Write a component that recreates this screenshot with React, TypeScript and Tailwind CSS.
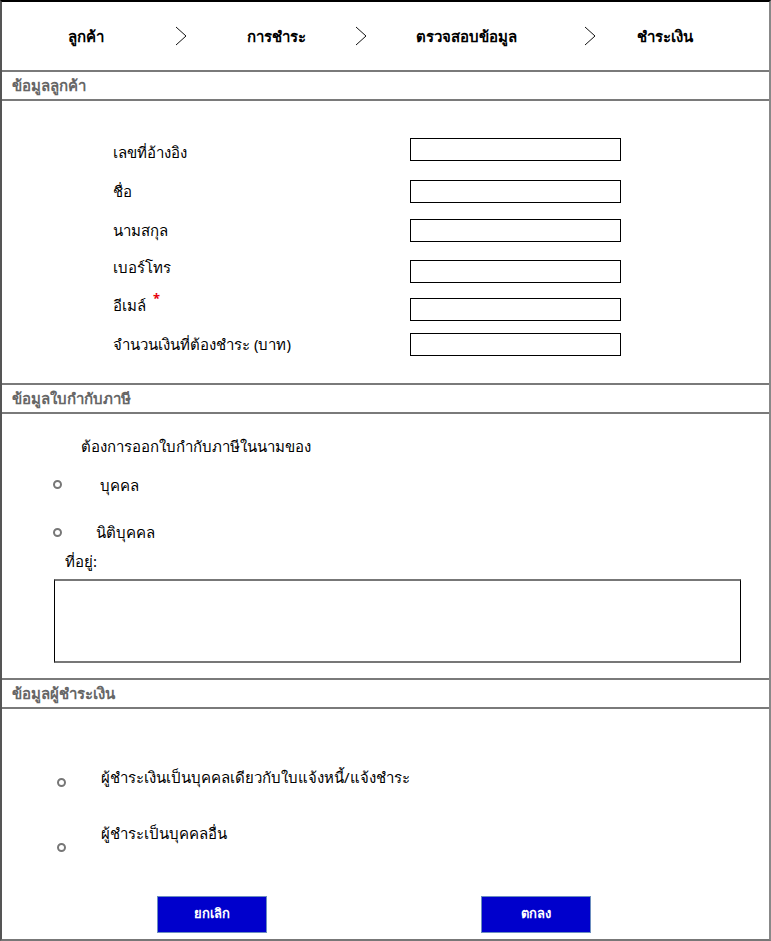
import React from "react";

const Chevron = () => (
  <svg width="20" height="20" viewBox="0 0 20 20" className="block">
    <polyline points="5,1 15,10 5,19" fill="none" stroke="#111" strokeWidth="1" />
  </svg>
);

const SectionHeader = ({ title }: { title: string }) => (
  <div className="h-[31px] border-y-2 border-[#7a7a7a] flex items-center px-[10px] text-[15px] font-bold text-[#666]">
    {title}
  </div>
);

const Radio = () => (
  <span className="block w-[9px] h-[9px] rounded-full border-2 border-[#777] bg-white" />
);

const fields: { label: string; mt: string; off: string; star?: boolean }[] = [
  { label: "เลขที่อ้างอิง", mt: "mt-[37px]", off: "top-[3px]" },
  { label: "ชื่อ", mt: "mt-[19px]", off: "top-0" },
  { label: "นามสกุล", mt: "mt-[16px]", off: "top-0" },
  { label: "เบอร์โทร", mt: "mt-[18px]", off: "-top-[4px]" },
  { label: "อีเมล์", mt: "mt-[15px]", off: "-top-[4px]", star: true },
  { label: "จำนวนเงินที่ต้องชำระ (บาท)", mt: "mt-[12px]", off: "top-0" },
];

export default function App() {
  return (
    <div
      className="w-[771px] h-[941px] bg-white border-t-2 border-l-2 border-t-black border-l-[#555] border-r-2 border-b-2 border-r-[#888] border-b-[#777] flex flex-col text-black"
      style={{ fontFamily: 'Tahoma, "Noto Sans", "DejaVu Sans", sans-serif' }}
    >
      {/* Steps */}
      <div className="h-[68px] shrink-0 flex items-center text-[15px] font-bold">
        <div className="w-[100px] ml-[34px] text-center">ลูกค้า</div>
        <div className="ml-[35px]"><Chevron /></div>
        <div className="w-[120px] ml-[25px] text-center">การชำระ</div>
        <div className="ml-[15px]"><Chevron /></div>
        <div className="w-[160px] ml-[15px] text-center">ตรวจสอบข้อมูล</div>
        <div className="ml-[34px]"><Chevron /></div>
        <div className="w-[120px] ml-[5px] text-center">ชำระเงิน</div>
      </div>

      <SectionHeader title="ข้อมูลลูกค้า" />
      <div className="h-[282px] shrink-0 flex flex-col text-[15px]">
        {fields.map((f) => (
          <div key={f.label} className={`flex items-center ${f.mt}`}>
            <div className="w-[408px] pl-[111px]">
              <span className={`relative ${f.off}`}>
                {f.label}
                {f.star && <span className="text-red-600 text-[13px] font-bold relative -top-[8px] ml-[7px]">*</span>}
              </span>
            </div>
            <div className="w-[211px] h-[23px] border border-black" />
          </div>
        ))}
      </div>

      <SectionHeader title="ข้อมูลใบกำกับภาษี" />
      <div className="h-[264px] shrink-0 flex flex-col text-[15px]">
        <div className="pl-[79px] mt-[21px]">ต้องการออกใบกำกับภาษีในนามของ</div>
        <div className="flex items-center mt-[16px]">
          <div className="ml-[51px]"><Radio /></div>
          <div className="ml-[38px]">บุคคล</div>
        </div>
        <div className="flex items-center mt-[25px]">
          <div className="ml-[51px]"><Radio /></div>
          <div className="ml-[34px]">นิติบุคคล</div>
        </div>
        <div className="pl-[63px] mt-[6px]">ที่อยู่:</div>
        <div className="ml-[52px] mt-[7px] w-[687px] h-[84px] border-y-2 border-y-[#777] border-x border-x-black" />
      </div>

      <SectionHeader title="ข้อมูลผู้ชำระเงิน" />
      <div className="flex-1 flex flex-col text-[15px]">
        <div className="flex items-start mt-[57px]">
          <div className="ml-[55px] mt-[2px] pt-[10px]"><Radio /></div>
          <div className="ml-[35px]">ผู้ชำระเงินเป็นบุคคลเดียวกับใบแจ้งหนี้/แจ้งชำระ</div>
        </div>
        <div className="flex items-start mt-[33px]">
          <div className="ml-[55px] mt-[11px] pt-[10px]"><Radio /></div>
          <div className="ml-[35px]">ผู้ชำระเป็นบุคคลอื่น</div>
        </div>
        <div className="flex mt-[44px]">
          <button className="ml-[155px] w-[110px] h-[37px] bg-[#0000cc] border border-[#6c8ebf] text-white text-[13px] font-bold">
            ยกเลิก
          </button>
          <button className="ml-[214px] w-[110px] h-[37px] bg-[#0000cc] border border-[#6c8ebf] text-white text-[13px] font-bold">
            ตกลง
          </button>
        </div>
      </div>
    </div>
  );
}
